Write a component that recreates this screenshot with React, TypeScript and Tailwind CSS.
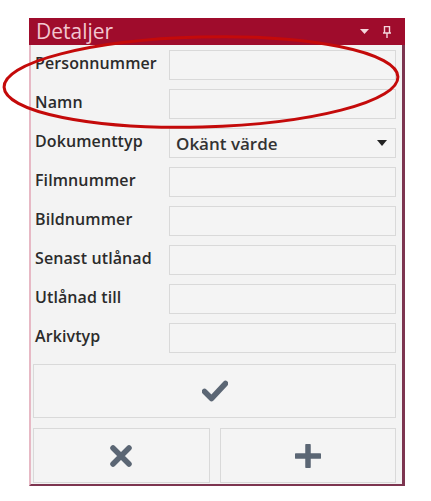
const rows = [
  { label: "Personnummer" },
  { label: "Namn" },
  { label: "Dokumenttyp", value: "Okänt värde", select: true },
  { label: "Filmnummer" },
  { label: "Bildnummer" },
  { label: "Senast utlånad" },
  { label: "Utlånad till" },
  { label: "Arkivtyp" },
];

export default function App() {
  return (
    <div className="relative h-[501px] w-[431px] bg-white pl-[29px] pt-[18px] font-['Open_Sans',sans-serif]">
      <div className="w-[376px]">
        {/* title bar */}
        <div className="flex h-[27px] items-center justify-between bg-[#9f0c2c] pl-[7px] pr-[14px]">
          <span className="text-[21px] leading-none text-[#f2c6d0]">Detaljer</span>
          <div className="flex items-center gap-[14px] text-[#f4d6dc]">
            <svg width="9" height="6" viewBox="0 0 9 6">
              <path d="M0 0h9L4.5 5z" fill="currentColor" />
            </svg>
            <svg width="8" height="12" viewBox="0 0 8 12">
              <path d="M1.5 0.5h5v6.5h-5z M0 7h8 M4 7v5" stroke="currentColor" strokeWidth="1.4" fill="none" />
            </svg>
          </div>
        </div>

        {/* body */}
        <div className="border-l-2 border-r-[3px] border-b-2 border-l-[#e7b9c5] border-r-[#7d3550] border-b-[#7d3550] bg-[#f3f3f3] pb-[1px] pl-[2px] pr-[6px] pt-[5px]">
          <div className="flex flex-col gap-[9px]">
            {rows.map((r) => (
              <div key={r.label} className="grid h-[30px] grid-cols-[136px_1fr] items-center">
                <span className="pl-[2px] text-[16px] font-semibold leading-none tracking-[0.1px] text-[#2b2b2b] -translate-y-[2px]">
                  {r.label}
                </span>
                <div className="flex h-full items-center justify-between border border-[#d9d9d9] bg-[#f4f4f4] pl-[6px] pr-[8px]">
                  {r.value && <span className="text-[17px] font-semibold leading-none text-[#333]">{r.value}</span>}
                  {r.select && (
                    <svg width="10" height="6" viewBox="0 0 10 6">
                      <path d="M0 0h10L5 6z" fill="#222" />
                    </svg>
                  )}
                </div>
              </div>
            ))}
          </div>

          <button className="mt-[11px] flex h-[54px] w-full items-center justify-center border border-[#d9d9d9] bg-[#f4f4f4]">
            <svg width="26" height="22" viewBox="0 0 26 22">
              <path d="M2.5 11.5l7 7L23.5 3.5" fill="none" stroke="#5b6674" strokeWidth="5.5" strokeLinejoin="round" strokeLinecap="round" />
            </svg>
          </button>
          <div className="mt-[10px] grid grid-cols-2 gap-[10px]">
            <button className="flex h-[55px] items-center justify-center border border-[#d9d9d9] bg-[#f4f4f4]">
              <svg width="24" height="24" viewBox="0 0 24 24">
                <path d="M4 4l16 16M20 4L4 20" fill="none" stroke="#5b6674" strokeWidth="5.5" strokeLinecap="round" />
              </svg>
            </button>
            <button className="flex h-[55px] items-center justify-center border border-[#d9d9d9] bg-[#f4f4f4]">
              <svg width="26" height="24" viewBox="0 0 26 24">
                <path d="M13 1.5v21M1.5 12h23" fill="none" stroke="#5b6674" strokeWidth="5.5" strokeLinecap="round" />
              </svg>
            </button>
          </div>
        </div>
      </div>

      {/* red annotation ellipse */}
      <svg className="pointer-events-none absolute left-0 top-0" width="431" height="501">
        <ellipse cx="201" cy="82" rx="197" ry="45" fill="none" stroke="#c40a0a" strokeWidth="3" transform="rotate(-1.5 201 82)" />
      </svg>
    </div>
  );
}
